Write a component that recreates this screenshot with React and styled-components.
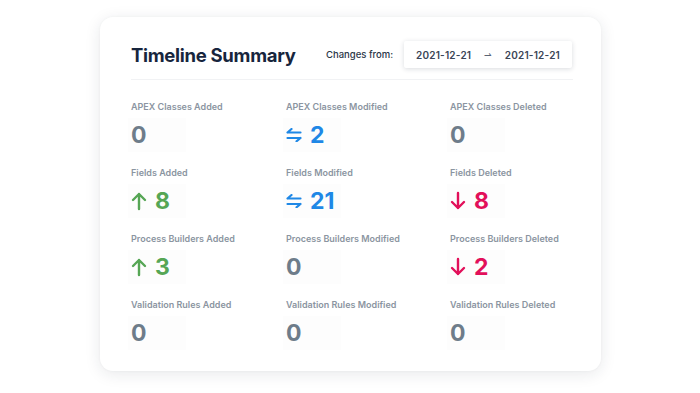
import React from "react";
import styled, { createGlobalStyle } from "styled-components";

const GlobalStyle = createGlobalStyle`
  html, body {
    margin: 0;
    padding: 0;
    background: #ffffff;
  }
  body {
    font-family: Inter, "Open Sans", "Liberation Sans", sans-serif;
  }
`;

const Page = styled.div`
  width: 700px;
  height: 393px;
  padding: 17px 0 0 100px;
  box-sizing: border-box;
`;

const Card = styled.div`
  width: 501px;
  height: 354px;
  box-sizing: border-box;
  background: #ffffff;
  border-radius: 13px;
  box-shadow: 0 3px 16px rgba(30, 40, 60, 0.1), 0 0 3px rgba(30, 40, 60, 0.04);
  padding: 24px 28px 0 31px;
`;

const Header = styled.div`
  display: flex;
  align-items: center;
  height: 27px;
  padding-bottom: 11px;
  border-bottom: 1px solid #f1f2f4;
`;

const Title = styled.h1`
  margin: 0;
  font-size: 18.5px;
  font-weight: 700;
  color: #17253d;
  letter-spacing: -0.3px;
  width: 195px;
`;

const ChangesLabel = styled.span`
  font-size: 9.5px;
  font-weight: 500;
  color: #2a3647;
  width: 78px;
`;

const DateBox = styled.div`
  display: flex;
  align-items: center;
  width: 168px;
  height: 27px;
  box-sizing: border-box;
  padding: 0 12px;
  justify-content: space-between;
  background: #ffffff;
  box-shadow: 0 1px 5px rgba(20, 30, 50, 0.16);
  border-radius: 2px;
`;

const DateText = styled.span`
  font-size: 10px;
  font-weight: 600;
  color: #3a4556;
  letter-spacing: 0.2px;
`;

const DateArrow = styled.span`
  font-size: 9px;
  color: #5a6575;
`;

const Grid = styled.div`
  display: grid;
  grid-template-columns: 155px 164px 1fr;
  grid-auto-rows: 66px;
  padding-top: 21px;
`;

const Cell = styled.div`
  display: flex;
  flex-direction: column;
  align-items: flex-start;
`;

const Label = styled.span`
  font-size: 9px;
  font-weight: 600;
  color: #8b95a1;
  line-height: 12px;
`;

const ValueBox = styled.div`
  display: flex;
  align-items: center;
  gap: 8px;
  margin-top: 5px;
  margin-left: -3px;
  padding: 0 3px;
  min-width: 52px;
  height: 34px;
  background: #fdfdfd;
  color: ${(p) => p.$color};
  font-size: 23px;
  font-weight: 700;
`;

const COLORS = {
  none: "#6e7c8a",
  up: "#56a655",
  mod: "#1f88e6",
  down: "#e2105a",
};

const TrendIcon = ({ kind, color }) => {
  if (kind === "up") {
    return (
      <svg width="16" height="20" viewBox="0 0 16 20" fill="none" stroke={color} strokeWidth="2.4" strokeLinecap="round" strokeLinejoin="round">
        <path d="M8 18V3M2 9l6-6 6 6" />
      </svg>
    );
  }
  if (kind === "down") {
    return (
      <svg width="16" height="20" viewBox="0 0 16 20" fill="none" stroke={color} strokeWidth="2.4" strokeLinecap="round" strokeLinejoin="round">
        <path d="M8 2v15M2 11l6 6 6-6" />
      </svg>
    );
  }
  if (kind === "mod") {
    return (
      <svg width="16" height="14" viewBox="0 0 16 14" fill="none" stroke={color} strokeWidth="2.2" strokeLinecap="round" strokeLinejoin="round">
        <path d="M1.5 4.5h13M1.5 4.5l4-3.5M14.5 10h-13M14.5 10l-4 3.3" />
      </svg>
    );
  }
  return null;
};

const stats = [
  { label: "APEX Classes Added", value: "0", kind: "none" },
  { label: "APEX Classes Modified", value: "2", kind: "mod" },
  { label: "APEX Classes Deleted", value: "0", kind: "none" },
  { label: "Fields Added", value: "8", kind: "up" },
  { label: "Fields Modified", value: "21", kind: "mod" },
  { label: "Fields Deleted", value: "8", kind: "down" },
  { label: "Process Builders Added", value: "3", kind: "up" },
  { label: "Process Builders Modified", value: "0", kind: "none" },
  { label: "Process Builders Deleted", value: "2", kind: "down" },
  { label: "Validation Rules Added", value: "0", kind: "none" },
  { label: "Validation Rules Modified", value: "0", kind: "none" },
  { label: "Validation Rules Deleted", value: "0", kind: "none" },
];

export default function App() {
  return (
    <>
      <GlobalStyle />
      <Page>
        <Card>
          <Header>
            <Title>Timeline Summary</Title>
            <ChangesLabel>Changes from:</ChangesLabel>
            <DateBox>
              <DateText>2021-12-21</DateText>
              <DateArrow>⇀</DateArrow>
              <DateText>2021-12-21</DateText>
            </DateBox>
          </Header>
          <Grid>
            {stats.map((s) => (
              <Cell key={s.label}>
                <Label>{s.label}</Label>
                <ValueBox $color={COLORS[s.kind]}>
                  <TrendIcon kind={s.kind} color={COLORS[s.kind]} />
                  <span>{s.value}</span>
                </ValueBox>
              </Cell>
            ))}
          </Grid>
        </Card>
      </Page>
    </>
  );
}
